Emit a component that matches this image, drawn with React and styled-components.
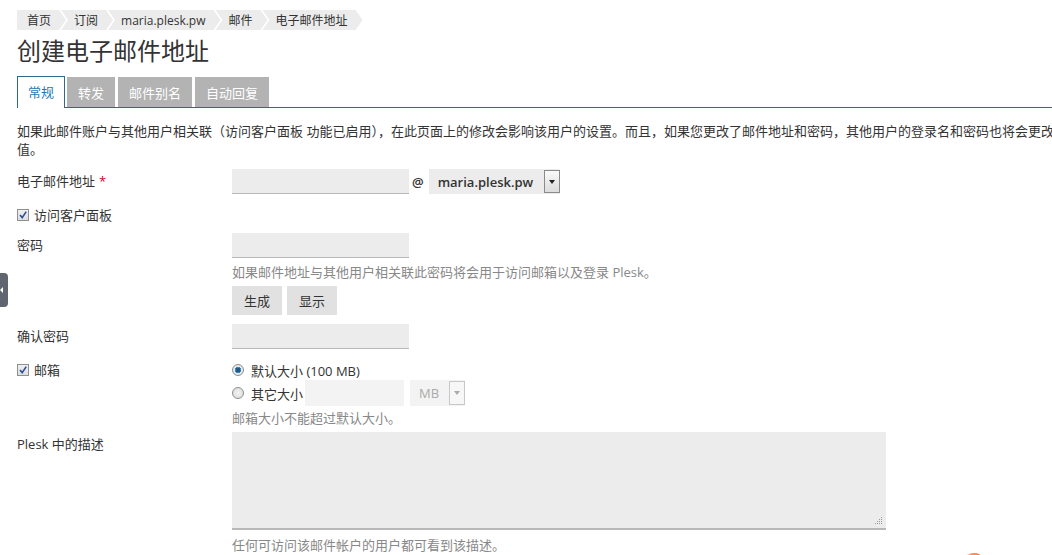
import React from "react";
import styled, { createGlobalStyle } from "styled-components";

const GlobalStyle = createGlobalStyle`
  html, body { margin: 0; padding: 0; background: #fff; overflow: hidden; }
  body {
    font-family: "Open Sans", "Noto Sans CJK SC", sans-serif;
    font-size: 13px;
    color: #333;
  }
`;

const Page = styled.div`
  padding: 10px 0 0 17px;
  position: relative;
`;

const Crumbs = styled.nav`
  display: flex;
  height: 20px;
`;

const Crumb = styled.span`
  display: flex;
  align-items: center;
  height: 20px;
  font-size: 12px;
  background: #ececec;
  color: #333;
  padding: ${(p) => (p.$first ? "0 15px 0 10px" : "0 15px 0 13px")};
  margin-left: ${(p) => (p.$first ? "0" : "-5px")};
  clip-path: ${(p) =>
    p.$first
      ? "polygon(0 0, calc(100% - 7px) 0, 100% 50%, calc(100% - 7px) 100%, 0 100%)"
      : "polygon(0 0, calc(100% - 7px) 0, 100% 50%, calc(100% - 7px) 100%, 0 100%, 7px 50%)"};
`;

const Title = styled.h1`
  margin: 6px 0 0;
  font-size: 24px;
  line-height: 30px;
  font-weight: normal;
  color: #333;
`;

const Tabs = styled.div`
  display: flex;
  align-items: flex-end;
  gap: 2px;
  margin-top: 10px;
  height: 31px;
  border-bottom: 1px solid #2b6a8c;
`;

const Tab = styled.div`
  box-sizing: border-box;
  height: ${(p) => (p.$active ? "32px" : "30px")};
  margin-bottom: ${(p) => (p.$active ? "-1px" : "0")};
  margin-left: ${(p) => (p.$wide ? "1px" : "0")};
  padding: 0 ${(p) => (p.$active ? 10 : 11)}px;
  display: flex;
  align-items: center;
  justify-content: center;
  font-size: 13px;
  background: ${(p) => (p.$active ? "#fff" : "#b3b3b3")};
  color: ${(p) => (p.$active ? "#1f78b0" : "#fff")};
  border: ${(p) => (p.$active ? "1px solid #2b6a8c" : "none")};
  border-bottom: none;
  padding-bottom: ${(p) => (p.$active ? "2px" : "0")};
`;

const Intro = styled.p`
  margin: 14px 0 0;
  line-height: 18px;
  white-space: nowrap;
`;

const Row = styled.div`
  display: grid;
  grid-template-columns: 215px 1fr;
  margin-top: ${(p) => p.$mt}px;
`;

const Label = styled.div`
  line-height: ${(p) => p.$lh || 25}px;
  display: flex;
  align-items: center;
  gap: 5px;
  height: ${(p) => p.$lh || 25}px;
`;

const Req = styled.span`
  color: #d0021b;
  margin-left: -1px;
`;

const Controls = styled.div`
  display: flex;
  flex-direction: column;
  align-items: flex-start;
`;

const Inline = styled.div`
  display: flex;
  align-items: center;
  height: ${(p) => p.$h || 25}px;
`;

const Input = styled.div`
  box-sizing: border-box;
  width: ${(p) => p.$w}px;
  height: ${(p) => p.$h || 25}px;
  margin-left: ${(p) => p.$ml || 0}px;
  background: ${(p) => (p.$disabled ? "#f3f3f3" : "#ececec")};
  border-bottom: ${(p) => (p.$disabled ? "none" : "1px solid #b8b8b8")};
`;

const At = styled.span`
  margin: 0 5px 0 3px;
  font-weight: 600;
`;

const Select = styled.div`
  box-sizing: border-box;
  width: ${(p) => p.$w}px;
  height: ${(p) => p.$h || 25}px;
  background: ${(p) => (p.$disabled ? "#f3f3f3" : "#ececec")};
  display: flex;
  align-items: center;
  justify-content: space-between;
  padding-left: 9px;
  color: ${(p) => (p.$disabled ? "#aaa" : "#333")};
  font-weight: ${(p) => (p.$disabled ? "normal" : "600")};
`;

const Arrow = styled.span`
  box-sizing: border-box;
  width: 16px;
  align-self: stretch;
  margin: 1px 0;
  border: 1px solid ${(p) => (p.$disabled ? "#c8c8c8" : "#8a8a8a")};
  background: ${(p) =>
    p.$disabled ? "#f7f7f7" : "linear-gradient(#fafafa, #dcdcdc)"};
  display: flex;
  align-items: center;
  justify-content: center;
  &::after {
    content: "";
    border-left: 3px solid transparent;
    border-right: 3px solid transparent;
    border-top: 4px solid ${(p) => (p.$disabled ? "#aaa" : "#222")};
  }
`;

const Box = styled.span`
  box-sizing: border-box;
  width: 12px;
  height: 12px;
  border: 1px solid #8e8f8f;
  background: linear-gradient(#f0f0f0, #dedede);
  display: inline-flex;
  align-items: center;
  justify-content: center;
  flex: none;
`;

const Radio = styled.span`
  box-sizing: border-box;
  width: 12px;
  height: 12px;
  border-radius: 50%;
  border: 1px solid #8e8f8f;
  background: ${(p) =>
    p.$on
      ? "radial-gradient(circle, #1f5a8a 0 2.2px, #3f8ac7 2.6px 3px, #e8e8e8 3.5px)"
      : "radial-gradient(circle, #f4f4f4, #d8d8d8)"};
  flex: none;
  margin-right: 7px;
`;

const Hint = styled.div`
  color: #888;
  line-height: 18px;
  margin-top: ${(p) => p.$mt}px;
`;

const Buttons = styled.div`
  display: flex;
  gap: 5px;
  margin-top: 5px;
`;

const Button = styled.div`
  height: 29px;
  padding: 0 12px;
  display: flex;
  align-items: center;
  justify-content: center;
  background: #e1e1e1;
  color: #333;
`;

const RadioLine = styled.div`
  display: flex;
  align-items: center;
  height: ${(p) => p.$h}px;
`;

const Gap = styled.span`
  width: ${(p) => p.$w}px;
  flex: none;
`;

const TextArea = styled.div`
  box-sizing: border-box;
  position: relative;
  width: 654px;
  height: 98px;
  background: #ececec;
  border-bottom: 2px solid #b8b8b8;
`;

const Grip = styled.svg`
  position: absolute;
  right: 3px;
  bottom: 3px;
`;

const SideHandle = styled.div`
  position: fixed;
  left: 0;
  top: 273px;
  width: 8px;
  height: 34px;
  background: #5f6670;
  border-radius: 0 4px 4px 0;
  &::after {
    content: "";
    position: absolute;
    left: 0;
    top: 14px;
    border-top: 3px solid transparent;
    border-bottom: 3px solid transparent;
    border-right: 3px solid #fff;
  }
`;

const OrangeBlip = styled.div`
  position: fixed;
  left: 966px;
  top: 553px;
  width: 16px;
  height: 10px;
  border-radius: 50%;
  background: linear-gradient(90deg, #f9b58c, #f26a2a);
`;

const Check = () => (
  <svg width="10" height="10" viewBox="0 0 10 10">
    <path d="M2 5 L4.2 7.6 L8.2 1.6" fill="none" stroke="#2c4f99" strokeWidth="1.6" />
  </svg>
);

export default function App() {
  return (
    <>
      <GlobalStyle />
      <Page>
        <Crumbs>
          <Crumb $first>首页</Crumb>
          <Crumb>订阅</Crumb>
          <Crumb>maria.plesk.pw</Crumb>
          <Crumb>邮件</Crumb>
          <Crumb>电子邮件地址</Crumb>
        </Crumbs>
        <Title>创建电子邮件地址</Title>
        <Tabs>
          <Tab $active>常规</Tab>
          <Tab>转发</Tab>
          <Tab $wide>邮件别名</Tab>
          <Tab $wide>自动回复</Tab>
        </Tabs>
        <Intro>
          如果此邮件账户与其他用户相关联（访问客户面板 功能已启用），在此页面上的修改会影响该用户的设置。而且，如果您更改了邮件地址和密码，其他用户的登录名和密码也将会更改
          <br />
          值。
        </Intro>

        <Row $mt={11}>
          <Label>
            电子邮件地址<Req>*</Req>
          </Label>
          <Controls>
            <Inline>
              <Input $w={177} />
              <At>@</At>
              <Select $w={131}>
                maria.plesk.pw
                <Arrow />
              </Select>
            </Inline>
          </Controls>
        </Row>

        <Row $mt={10}>
          <Label $lh={22}>
            <Box>
              <Check />
            </Box>
            访问客户面板
          </Label>
        </Row>

        <Row $mt={7}>
          <Label>密码</Label>
          <Controls>
            <Input $w={177} />
            <Hint $mt={5}>如果邮件地址与其他用户相关联此密码将会用于访问邮箱以及登录 Plesk。</Hint>
            <Buttons>
              <Button>生成</Button>
              <Button>显示</Button>
            </Buttons>
          </Controls>
        </Row>

        <Row $mt={9}>
          <Label>确认密码</Label>
          <Controls>
            <Input $w={177} />
          </Controls>
        </Row>

        <Row $mt={11}>
          <Label $lh={20}>
            <Box>
              <Check />
            </Box>
            邮箱
          </Label>
          <Controls>
            <RadioLine $h={20}>
              <Radio $on />
              默认大小 (100 MB)
            </RadioLine>
            <RadioLine $h={26}>
              <Radio />
              其它大小
              <Input $w={99} $h={26} $ml={2} $disabled />
              <Gap $w={6} />
              <Select $w={55} $h={26} $disabled>
                MB
                <Arrow $disabled />
              </Select>
            </RadioLine>
            <Hint $mt={3}>邮箱大小不能超过默认大小。</Hint>
          </Controls>
        </Row>

        <Row $mt={5}>
          <Label>Plesk 中的描述</Label>
          <Controls>
            <TextArea>
              <Grip width="8" height="8" viewBox="0 0 8 8">
                <g fill="#9a9a9a">
                  <rect x="6" y="0" width="1" height="1" />
                  <rect x="4" y="2" width="1" height="1" />
                  <rect x="6" y="2" width="1" height="1" />
                  <rect x="2" y="4" width="1" height="1" />
                  <rect x="4" y="4" width="1" height="1" />
                  <rect x="6" y="4" width="1" height="1" />
                  <rect x="0" y="6" width="1" height="1" />
                  <rect x="2" y="6" width="1" height="1" />
                  <rect x="4" y="6" width="1" height="1" />
                  <rect x="6" y="6" width="1" height="1" />
                </g>
              </Grip>
            </TextArea>
            <Hint $mt={6}>任何可访问该邮件帐户的用户都可看到该描述。</Hint>
          </Controls>
        </Row>
      </Page>
      <SideHandle />
      <OrangeBlip />
    </>
  );
}
